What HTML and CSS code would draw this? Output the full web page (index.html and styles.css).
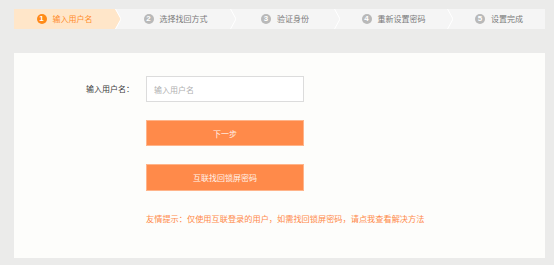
FILE: index.html
```html
<!DOCTYPE html>
<html lang="zh-CN">
<head>
<meta charset="utf-8">
<title>找回密码</title>
<link rel="stylesheet" href="styles.css">
</head>
<body>
<div class="page">
  <div class="steps">
    <div class="step step-1 active"><span class="num">1</span><span class="label">输入用户名</span></div>
    <svg class="sep" width="6" height="20" viewBox="0 0 6 20"><polygon points="0,0 0,20 6,10" fill="#ffe6c9"/><polyline points="0.5,0 6,10 0.5,20" fill="none" stroke="#ffffff" stroke-width="1"/></svg>
    <div class="step step-2"><span class="num">2</span><span class="label">选择找回方式</span></div>
    <svg class="sep" width="6" height="20" viewBox="0 0 6 20"><polyline points="0.5,0 6,10 0.5,20" fill="none" stroke="#ffffff" stroke-width="1"/></svg>
    <div class="step step-3"><span class="num">3</span><span class="label">验证身份</span></div>
    <svg class="sep" width="6" height="20" viewBox="0 0 6 20"><polyline points="0.5,0 6,10 0.5,20" fill="none" stroke="#ffffff" stroke-width="1"/></svg>
    <div class="step step-4"><span class="num">4</span><span class="label">重新设置密码</span></div>
    <svg class="sep" width="6" height="20" viewBox="0 0 6 20"><polyline points="0.5,0 6,10 0.5,20" fill="none" stroke="#ffffff" stroke-width="1"/></svg>
    <div class="step step-5"><span class="num">5</span><span class="label">设置完成</span></div>
  </div>
  <div class="panel">
    <div class="form">
      <label class="form-label" for="user">输入用户名：</label>
      <div class="form-field">
        <input id="user" class="input" type="text" placeholder="输入用户名">
        <button class="btn btn-next" type="button">下一步</button>
        <button class="btn btn-lock" type="button">互联找回锁屏密码</button>
        <p class="tip">友情提示：仅使用互联登录的用户，如需找回锁屏密码，请点我查看解决方法</p>
      </div>
    </div>
  </div>
</div>
</body>
</html>
```

FILE: styles.css
```css
html, body {
  margin: 0;
  padding: 0;
  background: #ebebea;
}
body {
  font-family: "Noto Sans CJK SC", "Noto Sans", sans-serif;
  font-size: 8px;
  color: #444;
  width: 554px;
  height: 265px;
  overflow: hidden;
}
.page {
  padding: 9px 9px 0 14px;
}
.steps {
  display: flex;
  height: 20px;
  background: #f5f5f5;
  align-items: stretch;
}
.step {
  display: flex;
  align-items: center;
  justify-content: center;
  gap: 6px;
  color: #7a7a7a;
  white-space: nowrap;
}
.step-1 { width: 101px; background: #ffe6c9; color: #ff8c2b; }
.step-2 { width: 109px; }
.step-3 { width: 98px; }
.step-4 { width: 107px; }
.step-5 { flex: 1; }
.sep {
  flex: none;
  display: block;
}
.num {
  width: 10px;
  height: 10px;
  border-radius: 50%;
  background: #b9b9b9;
  color: #fff;
  font-family: "Liberation Sans", sans-serif;
  font-size: 8px;
  font-weight: bold;
  line-height: 10px;
  text-align: center;
}
.active .num {
  background: #ff8a18;
}
.label {
  line-height: 10px;
}
.panel {
  margin-top: 24px;
  height: 205px;
  background: #fdfdfb;
}
.form {
  display: grid;
  grid-template-columns: 132px 158px;
  padding-top: 23px;
}
.form-label {
  text-align: right;
  padding-right: 12px;
  height: 26px;
  line-height: 26px;
  color: #3c3c3c;
  font-size: 8px;
}
.form-field {
  display: flex;
  flex-direction: column;
}
.input {
  box-sizing: border-box;
  width: 158px;
  height: 26px;
  margin: 0;
  border: 1px solid #dcdcdc;
  background: #fff;
  padding: 0 7px;
  font-family: "Noto Sans CJK SC", sans-serif;
  font-size: 8px;
  color: #444;
  outline: none;
}
.input::placeholder {
  color: #b0b0b0;
}
.btn {
  box-sizing: border-box;
  width: 158px;
  margin: 18px 0 0;
  padding: 0;
  border: 1px solid #ffb48a;
  background: #ff8a4a;
  color: #fff3ea;
  font-family: "Noto Sans CJK SC", sans-serif;
  font-size: 8px;
  cursor: pointer;
}
.btn-next { height: 26px; }
.btn-lock { height: 27px; }
.tip {
  margin: 22px 0 0;
  white-space: nowrap;
  color: #ff8a4a;
  font-size: 8.2px;
  line-height: 10px;
}
```
